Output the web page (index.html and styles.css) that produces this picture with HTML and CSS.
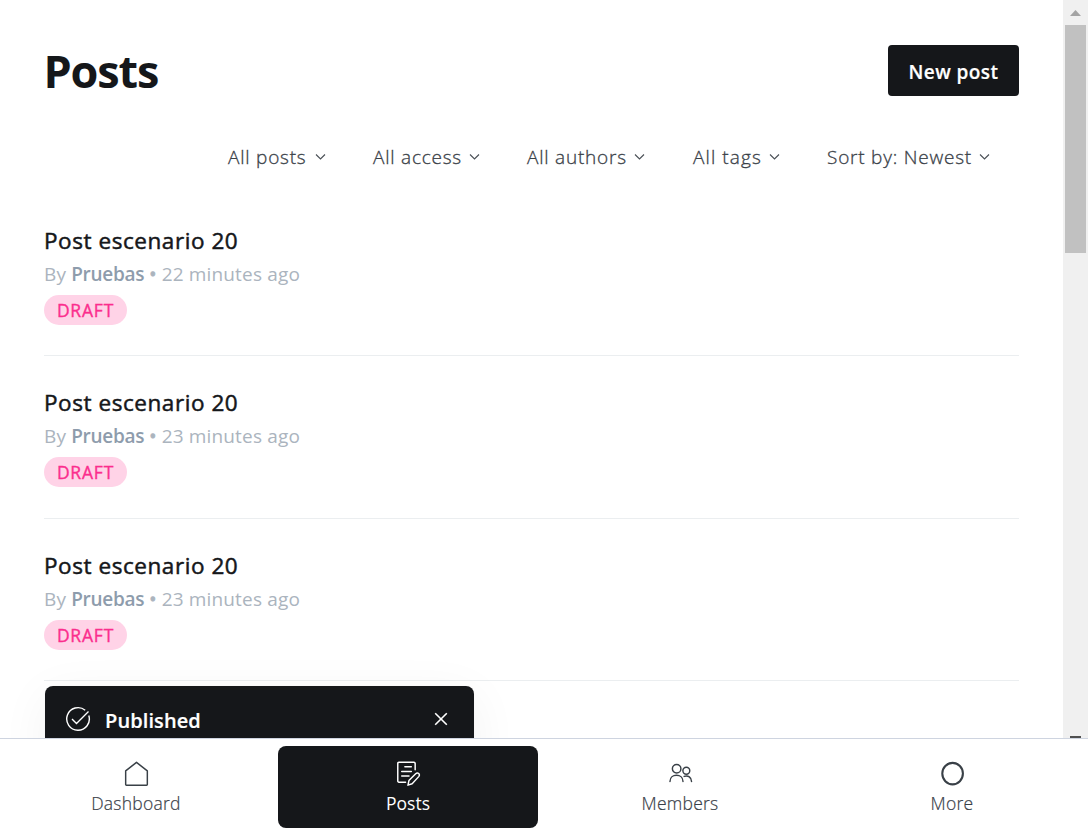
FILE: index.html
```html
<!DOCTYPE html>
<html lang="en">
<head>
<meta charset="utf-8">
<title>Posts</title>
<link rel="stylesheet" href="styles.css">
</head>
<body>
<div class="app">
  <div class="viewport">
    <main class="content">
      <header class="header">
        <h1 class="title">Posts</h1>
        <a class="new-post"><span>New post</span></a>
      </header>
      <div class="filters">
        <div class="filter f-posts"><span>All posts</span><svg class="chev" viewBox="0 0 11 8"><path d="M1 1.5 5.5 6 10 1.5"/></svg></div>
        <div class="filter f-access"><span>All access</span><svg class="chev" viewBox="0 0 11 8"><path d="M1 1.5 5.5 6 10 1.5"/></svg></div>
        <div class="filter f-authors"><span>All authors</span><svg class="chev" viewBox="0 0 11 8"><path d="M1 1.5 5.5 6 10 1.5"/></svg></div>
        <div class="filter f-tags"><span>All tags</span><svg class="chev" viewBox="0 0 11 8"><path d="M1 1.5 5.5 6 10 1.5"/></svg></div>
        <div class="filter f-sort"><span>Sort by: Newest</span><svg class="chev" viewBox="0 0 11 8"><path d="M1 1.5 5.5 6 10 1.5"/></svg></div>
      </div>
      <article class="post"><h3 class="post-title">Post escenario 20</h3><p class="meta">By <b>Pruebas</b> <span class="dot">•</span> 22 minutes ago</p><span class="badge">DRAFT</span></article>
      <article class="post"><h3 class="post-title">Post escenario 20</h3><p class="meta">By <b>Pruebas</b> <span class="dot">•</span> 23 minutes ago</p><span class="badge">DRAFT</span></article>
      <article class="post"><h3 class="post-title">Post escenario 20</h3><p class="meta">By <b>Pruebas</b> <span class="dot">•</span> 23 minutes ago</p><span class="badge">DRAFT</span></article>
    </main>
    <div class="scrollbar">
      <svg class="arrow" viewBox="0 0 25 25"><path d="M7 16 12.5 10 18 16z" fill="#a3a3a3"/></svg>
      <div class="thumb"></div>
      <div class="arrow-down"></div>
    </div>
    <div class="toast">
      <svg class="check" viewBox="0 0 26 26"><path d="M20.2 4.2A11.3 11.3 0 1 0 23.8 9.5"/><path d="M7 13 11.5 17.5 23.5 5.5"/></svg>
      <span class="toast-text">Published</span>
      <svg class="close" viewBox="0 0 14 14"><path d="M1.2 1.2 12.8 12.8M12.8 1.2 1.2 12.8"/></svg>
    </div>
  </div>
  <nav class="nav">
    <a class="tab"><svg class="icon" viewBox="0 0 24 24"><path d="M1.6 9.5 12 1.3 22.4 9.5V22.5Q22.4 23.2 21.7 23.2H2.3Q1.6 23.2 1.6 22.5Z"/></svg><span>Dashboard</span></a>
    <a class="tab active"><svg class="icon" viewBox="0 0 24 24"><path d="M9.2 20.3H2.8Q1.7 20.3 1.7 19.2V2.3Q1.7 1.2 2.8 1.2H17.2Q18.4 1.2 18.4 2.3V8.5M8.5 5.6H14.7M5.5 10H14.7M5.5 14.4H12.5"/><path d="M11.5 23.2 12.4 18.8 18.9 12.2Q20.4 10.9 21.8 12Q23.1 13.5 21.8 15L15.5 21.8Z"/></svg><span>Posts</span></a>
    <a class="tab"><svg class="icon" viewBox="0 0 24 24"><circle cx="8.3" cy="7.5" r="4.1"/><circle cx="17.6" cy="9.4" r="3.3"/><path d="M1.9 19.6C1.9 11.8 14.4 11.8 14.4 19.6M15.5 14.8C19.3 13.3 22.6 15.9 22.6 19.6"/></svg><span>Members</span></a>
    <a class="tab"><svg class="icon" viewBox="0 0 24 24"><ellipse class="ring" cx="12.1" cy="12.1" rx="9.9" ry="10.3"/></svg><span>More</span></a>
  </nav>
</div>
</body>
</html>
```
FILE: styles.css
```css
* { box-sizing: border-box; }
body { margin: 0; font-family: "Segoe UI", "Open Sans", "Noto Sans", sans-serif; color: #15171a; background: #fff; }
.app { width: 1088px; height: 834px; display: flex; flex-direction: column; overflow: hidden; }
.viewport { position: relative; height: 738px; display: flex; overflow: hidden; }
.content { flex: 1; padding: 45px 44px 0; }
.header { display: flex; justify-content: space-between; align-items: flex-start; height: 51px; }
.title { margin: 0 0 0 -0.5px; font-size: 45px; line-height: 52px; font-weight: 700; letter-spacing: -1.15px; }
.new-post { width: 131px; height: 51px; border-radius: 4px; background: #15171a; color: #fff; font-size: 19px; font-weight: 600; line-height: 54px; letter-spacing: 0.45px; text-align: center; white-space: nowrap; -webkit-text-stroke: 0.2px; }
.filters { display: flex; justify-content: flex-end; height: 97.5px; padding: 46px 29px 0 0; font-size: 19px; font-weight: 300; line-height: 30px; letter-spacing: 0.78px; color: #394047; white-space: nowrap; -webkit-text-stroke: 0.3px; }
.filter { display: flex; justify-content: space-between; height: 30px; margin-left: 47px; }
.f-posts { width: 98px; }
.f-access { width: 107px; }
.f-authors { width: 118px; margin-right: 1px; }
.f-tags { width: 87px; letter-spacing: 1.1px; }
.f-sort { width: 163px; }
.chev { width: 11px; height: 8px; margin-top: 11px; fill: none; stroke: #4b5157; stroke-width: 1.15; }
.post { height: 162.5px; padding-top: 31px; border-bottom: 1px solid #ebeef0; white-space: nowrap; }
.post-title { margin: 0; font-size: 22.5px; line-height: 32px; font-weight: 400; letter-spacing: 0.56px; color: #15171a; -webkit-text-stroke: 0.5px; }
.meta { margin: 0; height: 38px; font-size: 19px; line-height: 35px; letter-spacing: 0.16px; color: #abb4be; }
.meta b { font-weight: 600; letter-spacing: -0.3px; color: #8e9cac; }
.dot { -webkit-text-stroke: 0.8px; }
.badge { display: block; width: 83px; height: 30px; border-radius: 15px; background: #ffd3e7; color: #fb2d8d; font-size: 17.5px; font-weight: 400; line-height: 31px; letter-spacing: 0.8px; text-align: center; -webkit-text-stroke: 0.35px; }
.scrollbar { width: 25px; background: #f0f0f0; display: flex; flex-direction: column; align-items: center; }
.arrow { width: 25px; height: 25px; }
.thumb { width: 21px; height: 228px; background: #c1c1c1; }
.arrow-down { width: 11px; height: 2px; margin-top: auto; background: #505050; }
.toast { position: absolute; left: 45px; top: 686px; width: 429px; height: 80px; display: flex; padding: 20px 26px 0 20px; border-radius: 8px; background: #15171a; color: #fff; box-shadow: 0 0 2px rgba(0,0,0,.03), 0 10px 50px rgba(0,0,0,.055); }
.check { width: 26px; height: 26px; fill: none; stroke: #fff; stroke-width: 1.4; }
.toast-text { flex: 1; margin-left: 14px; font-size: 20px; line-height: 29px; font-weight: 600; letter-spacing: 0.1px; -webkit-text-stroke: 0.2px; }
.close { width: 14px; height: 14px; margin-top: 6px; fill: none; stroke: #fff; stroke-width: 1.6; }
.nav { height: 96px; display: grid; grid-template-columns: repeat(4, 260px); justify-content: space-around; padding-top: 7px; border-top: 1px solid #ced4e0; background: #fff; }
.tab { height: 82px; border-radius: 8px; display: flex; flex-direction: column; align-items: center; padding-top: 15px; color: #394047; font-size: 17.5px; font-weight: 300; line-height: 27px; letter-spacing: 0.25px; -webkit-text-stroke: 0.2px; }
.icon { width: 25px; height: 25px; margin: 0 0 4px; fill: none; stroke: currentColor; stroke-width: 1.4; stroke-linejoin: round; stroke-linecap: round; }
.ring { stroke-width: 2; }
.active { background: #15171a; color: #fff; font-weight: 400; letter-spacing: 0; -webkit-text-stroke: 0; }
```
